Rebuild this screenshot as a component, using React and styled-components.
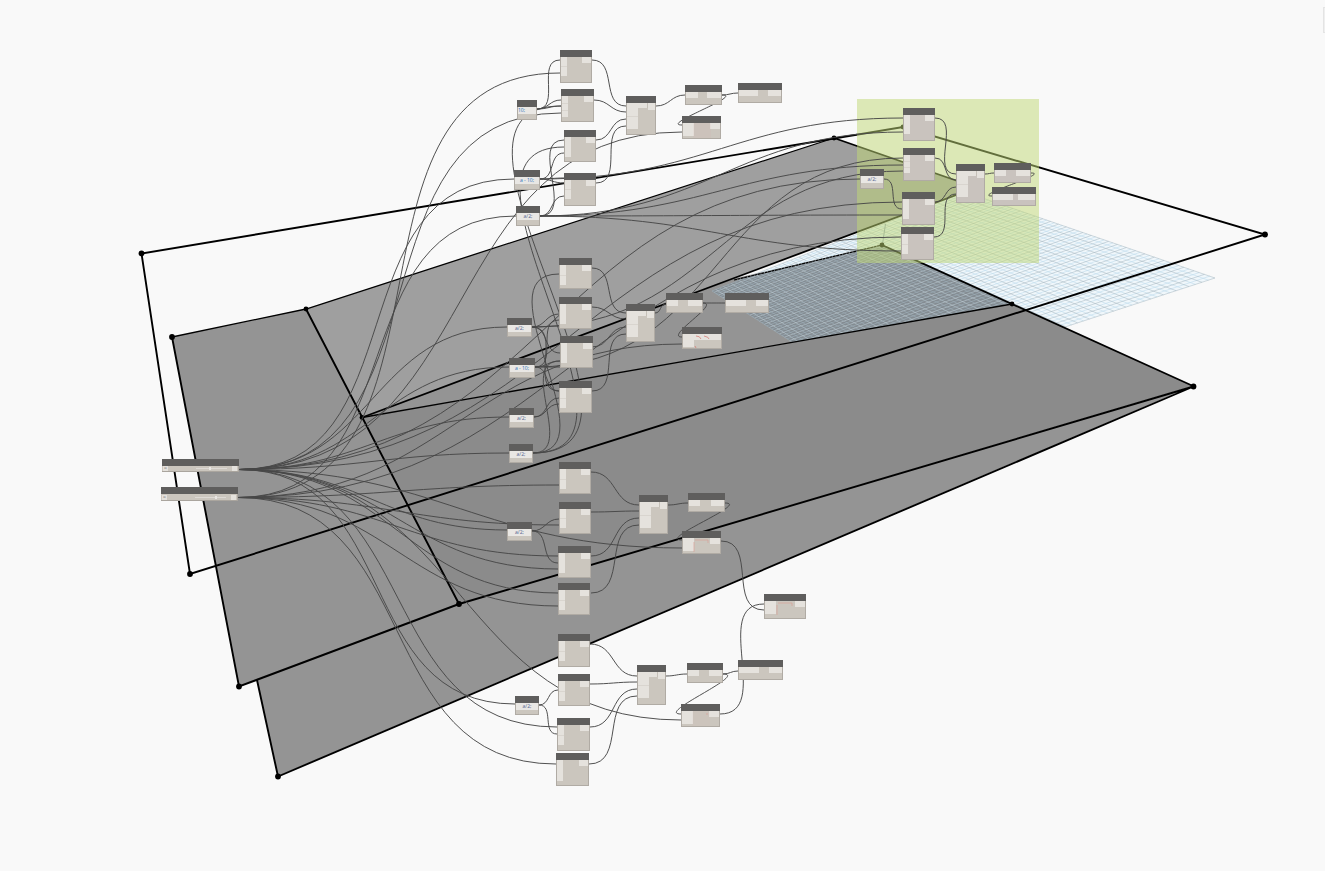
import React from 'react'
import styled, { createGlobalStyle } from 'styled-components'

const GlobalStyle = createGlobalStyle`
  body {
    margin: 0;
    background: #f9f9f9;
    font-family: 'Open Sans', 'Noto Sans', sans-serif;
    overflow: hidden;
  }
`
const Workspace = styled.main`
  position: relative;
  width: 1325px;
  height: 871px;
  overflow: hidden;
  background: #f9f9f9;
`
const Layer = styled.svg`
  position: absolute;
  inset: 0;
  display: block;
`
const GroupArea = styled.div`
  position: absolute;
  left: 857px;
  top: 99px;
  width: 182px;
  height: 164px;
  background: rgba(192, 216, 118, 0.51);
`
const PanelEdge = styled.div`
  position: absolute;
  right: 0;
  top: 7px;
  width: 2px;
  height: 26px;
  box-sizing: border-box;
  border: solid #e4e4e4;
  border-width: 1px 0 1px 1px;
  background: #efefef;
`
const StyledNode = styled.div`
  position: absolute;
  left: ${(p) => p.$x}px;
  top: ${(p) => p.$y}px;
  width: ${(p) => p.$w}px;
  height: ${(p) => p.$h}px;
  display: flex;
  flex-direction: column;
  background: ${(p) => (p.$tinted ? '#c9c3be' : '#cbc6be')};
`
const Header = styled.div`
  flex: none;
  height: ${(p) => p.$size ?? 6.5}px;
  background: #5f5e5d;
`
const Body = styled.div`
  position: relative;
  flex: 1;
  display: flex;
  justify-content: space-between;
  align-items: flex-start;
  box-sizing: border-box;
  border: solid #b0aba4;
  border-width: 0 1px 1px;
`
const Port = styled.div`
  width: ${(p) => p.$w}px;
  height: ${(p) => p.$h}px;
  box-sizing: border-box;
  background: #e5e2dd;
`
const InPorts = styled.div`
  display: flex;
  flex-direction: column;
`
const SplitPort = styled(Port)`
  & + & {
    border-top: 1px solid #d9d5cf;
  }
`
const LacingPort = styled(Port)`
  flex: 1;
  border-right: 1px solid #c5c0b8;
`
const Code = styled.div`
  flex: 1;
  height: 7px;
  background: #e9e7e4;
  color: ${(p) => (p.$blue ? '#2f74bd' : '#50628f')};
  font-size: 5px;
  line-height: 6px;
  text-align: ${(p) => (p.$left ? 'left' : 'center')};
  white-space: nowrap;
`
const Marks = styled.svg`
  position: absolute;
  left: 10px;
  top: 0;
`
const SliderRow = styled.div`
  flex: 1;
  display: flex;
  align-items: center;
  gap: 2px;
  padding: 0 1px;
  box-sizing: border-box;
  border: solid #aaa59e;
  border-width: 0 1px 1px 0;
`
const SliderCap = styled.span`
  width: 5px;
  height: 5px;
  box-sizing: border-box;
  background: #e4e1dc;
  font-size: 4px;
  line-height: 4px;
  text-align: center;
  color: #555;
`
const Track = styled.span`
  position: relative;
  flex: 1;
  height: 1px;
  margin-left: ${(p) => p.$start}px;
  margin-right: 3px;
  background: #dedad5;

  &::after {
    content: '';
    position: absolute;
    right: ${(p) => p.$thumb}px;
    top: -1px;
    width: 2px;
    height: 3px;
    background: #e9e6e2;
  }
`

const fnNodes = [
  [560, 50, 32, 33, 19, 2], [561, 89, 33, 33, 21, 3], [564, 130, 32, 32, 20, 1], [564, 173, 32, 33, 19, 2],
  [559, 258, 33, 31, 20, 2], [559, 297, 33, 32, 20, 1], [560, 336, 33, 32, 20, 1], [559, 381, 33, 32, 20, 2],
  [559, 462, 32, 32, 20, 2], [559, 502, 32, 32, 19, 2], [558, 546, 33, 32, 20, 1], [558, 583, 32, 32, 20, 2],
  [558, 634, 32, 33, 20, 2], [558, 674, 32, 32, 20, 2], [557, 718, 33, 33, 20, 2], [556, 753, 33, 33, 21, 1],
  [903, 108, 32, 33, 19, 1, true], [903, 148, 32, 33, 19, 3, true], [902, 192, 33, 33, 20, 1, true], [901, 227, 33, 33, 20, 2, true],
]

const codeNodes = [
  [517, 100, 20, 20, '10;', true, true], [514, 170, 26, 20, 'a - 10;', true], [516, 206, 24, 20, 'a/2;'],
  [507, 318, 25, 19, 'a/2;'], [509, 358, 26, 19.5, 'a - 10;', true], [509, 408, 25, 20, 'a/2;'],
  [509, 444, 24, 19, 'a/2;'], [507, 522, 25, 19, 'a/2;'], [515, 696, 24, 19, 'a/2;'], [860, 169, 24, 20, 'a/2;'],
]

const listNodes = [
  [626, 96, 30, 39], [626, 304, 29, 38], [639, 495, 29, 39], [637, 665, 29, 40], [956, 164, 29, 39, true],
]

// x, y, width, height, in port width, out port width
const wideNodes = [
  [685, 85, 37, 20, 12, 14], [738, 83, 44, 20, 19, 13],
  [666, 293, 37, 20, 11, 14], [725, 293, 44, 20, 20, 12],
  [688, 493, 37, 19, 11, 13],
  [687, 663, 36, 20, 11, 13], [738, 660, 45, 20, 20, 13],
  [994, 163, 37, 20, 11, 14, true], [992, 187, 44, 19, 20, 17, true],
]

const geometryNodes = [
  { box: [682, 116, 39, 23], tint: 0.1 },
  { box: [682, 327, 40, 22], marks: 'M3 2q4 0 5 3M11 2q5 1 5 3M2 12l1 2', strong: true },
  { box: [682, 531, 39, 23], marks: 'M2 2h13v3M1 4v10' },
  { box: [764, 594, 42, 25], marks: 'M3 2h14v3M2 4v10' },
  { box: [681, 704, 39, 23], marks: 'M15 2v2', tint: 0.06 },
]

const S1 = [239, 469.5]
const S2 = [238, 497.5]

const wires = [
  // slider outputs
  [S2, [560, 73]], [S1, [561, 113]], [S1, [514, 179]], [S2, [516, 216]], [S1, [682, 132]],
  [S1, [507, 327]], [S1, [509, 367]], [S1, [509, 417]], [S1, [509, 453]], [S2, [682, 344]],
  [S2, [559, 485]], [S2, [559, 525]], [S1, [507, 530]], [S2, [558, 556]], [S1, [558, 569]],
  [S1, [558, 593]], [S2, [558, 606]], [S1, [682, 548]], [S1, [681, 720]],
  [S1, [515, 704]], [S1, [557, 727]], [S2, [556, 764]],
  [S1, [860, 179]], [S1, [902, 202]], [S2, [901, 237]],
  // first cluster
  [[537, 109], [560, 60]], [[537, 109], [561, 100]], [[537, 109], [561, 106]],
  [[540, 179], [564, 153]], [[540, 179], [564, 183]], [[540, 179], [564, 178]],
  [[540, 216], [564, 140]], [[540, 216], [564, 196]],
  [[540, 179], [903, 118]], [[540, 216], [903, 132]], [[540, 216], [903, 165]],
  [[540, 216], [902, 215]], [[540, 216], [901, 251]],
  [[592, 60], [626, 106]], [[594, 100], [626, 112]], [[596, 140], [626, 119]], [[596, 183], [626, 126]],
  [[656, 106], [685, 95]], [[722, 95], [738, 93]], [[722, 95], [682, 125]],
  // second cluster
  [[533, 453], [564, 147]], [[533, 453], [561, 106]], [[533, 453], [559, 274]], [[533, 453], [560, 361]],
  [[532, 327], [559, 314]], [[532, 327], [559, 326]], [[532, 327], [560, 353]], [[532, 327], [559, 391]],
  [[535, 367], [559, 320]], [[535, 367], [560, 361]], [[535, 367], [559, 391]], [[535, 367], [560, 367]],
  [[534, 417], [559, 398]], [[534, 417], [559, 404]],
  [[532, 327], [903, 171]], [[535, 367], [903, 158]],
  [[592, 268], [626, 313]], [[592, 307], [626, 319]], [[592, 347], [626, 327]], [[592, 391], [626, 334]],
  [[655, 313], [666, 304]], [[703, 303], [725, 303]], [[703, 303], [682, 337]],
  // third cluster
  [[532, 531], [559, 519]], [[532, 531], [558, 563]],
  [[591, 472], [639, 505]], [[591, 512], [639, 511]], [[591, 556], [639, 518]], [[591, 593], [639, 525]],
  [[668, 505], [688, 503]], [[725, 503], [682, 540]], [[721, 541], [764, 610]], [[720, 714], [764, 604]],
  // fourth cluster
  [[539, 705], [558, 690]], [[539, 705], [557, 734]],
  [[590, 644], [637, 676]], [[590, 684], [637, 682]], [[590, 727], [637, 689]], [[589, 764], [637, 696]],
  [[666, 676], [687, 674]], [[723, 674], [738, 671]], [[723, 674], [681, 714]],
  // highlighted cluster
  [[884, 179], [902, 209]], [[935, 118], [956, 174]], [[935, 158], [956, 180]],
  [[935, 202], [956, 187]], [[934, 237], [956, 194]],
  [[985, 174], [994, 173]], [[1031, 173], [992, 196]],
]

const wirePath = ([[x1, y1], [x2, y2]]) => {
  const offset = Math.hypot(x2 - x1, y2 - y1) * 0.45
  return `M${x1} ${y1}C${x1 + offset} ${y1} ${x2 - offset} ${y2} ${x2} ${y2}`
}

// maps the unit square onto the ground plane quad
const project = (() => {
  const [[x0, y0], [x1, y1], [x2, y2], [x3, y3]] = [[712, 291], [965, 192], [1215, 278], [869, 391]]
  const dx1 = x1 - x2
  const dx2 = x3 - x2
  const dx3 = x0 - x1 + x2 - x3
  const dy1 = y1 - y2
  const dy2 = y3 - y2
  const dy3 = y0 - y1 + y2 - y3
  const det = dx1 * dy2 - dx2 * dy1
  const g = (dx3 * dy2 - dx2 * dy3) / det
  const h = (dx1 * dy3 - dx3 * dy1) / det
  return (u, v) => {
    const w = g * u + h * v + 1
    const x = ((x1 - x0 + g * x1) * u + (x3 - x0 + h * x3) * v + x0) / w
    const y = ((y1 - y0 + g * y1) * u + (y3 - y0 + h * y3) * v + y0) / w
    return `${x.toFixed(2)} ${y.toFixed(2)}`
  }
})()

const CELLS = 60
const STEP = 2
const gridPath = (major) =>
  Array.from({ length: CELLS + 1 }, (_, i) => i)
    .filter((i) => (i % STEP === 0) === major)
    .map((i) => {
      const t = i / CELLS
      return `M${project(t, 0)}L${project(t, 1)}M${project(0, t)}L${project(1, t)}`
    })
    .join('')

const dots = [
  [141.5, 253.5], [172, 337], [190, 574], [239, 686.5], [278, 776.5], [459, 604], [1193.5, 386.5],
  [1265, 234.5],
]
const smallDots = [[306, 309], [834, 138], [362, 417.5], [903, 127], [882, 245], [1012, 304]]

const Geometry = () => (
  <Layer width="1325" height="871">
    <defs>
      <clipPath id="shade">
        <path d="M640 314L734 279L882 245L1012 304L362 417.500Z" />
      </clipPath>
    </defs>
    <path d={`M${project(0, 0)}L${project(1, 0)}L${project(1, 1)}L${project(0, 1)}Z`} fill="#f0f7fb" />
    <path d={gridPath(false)} stroke="#bfdcec" strokeWidth="0.6" fill="none" />
    <path d={gridPath(true)} stroke="#a3b4be" strokeWidth="0.5" fill="none" />
    <path d="M306 309L834 138L976 187.500L362 417.500Z" fill="#9f9f9f" />
    <path d="M362 417.500L734 278.500L882 245L1012 304Z" fill="#949494" />
    <g clipPath="url(#shade)">
      <path d={`M${project(0, 0)}L${project(1, 0)}L${project(1, 1)}L${project(0, 1)}Z`} fill="#848c92" />
      <path d={gridPath(false)} stroke="#bccbd4" strokeWidth="0.6" fill="none" />
      <path d={gridPath(true)} stroke="#a0b0ba" strokeWidth="0.6" fill="none" />
    </g>
    <path d="M257 680L278 776L1193 386L459 604Z" fill="#949494" />
    <path d="M172 337L306 309L459 604L239 686Z" fill="#949494" />
    <path d="M362 417.500L1012 304L1193 386L459 604Z" fill="#8b8b8b" />
    <g stroke="#000" fill="none">
      <path d="M172 337L306 309L834 138M362 417.500L1012 304" strokeWidth="1.3" />
      <path d="M734 280L882 245" strokeWidth="1.2" strokeDasharray="3 0.500" />
      <path d="M834 138L976 187.500L362 417.500M882 245L1193 386" strokeWidth="1.8" />
      <path
        d="M190 574L141.500 253.500L903 127L1265 234.500ZM172 337L239 686.500L459 604L1193.500 386.500L278 776.500L257 680M306 309L459 604"
        strokeWidth="1.9"
      />
    </g>
    <path d="M885.500 224L882.500 244" stroke="#8f9fb3" />
    {dots.map(([x, y]) => (
      <circle key={`${x}-${y}`} cx={x} cy={y} r="2.9" />
    ))}
    {smallDots.map(([x, y]) => (
      <circle key={`${x}-${y}`} cx={x} cy={y} r="2.4" />
    ))}
  </Layer>
)

const Node = ({ box: [x, y, w, h], header, tinted, children }) => (
  <StyledNode $x={x} $y={y} $w={w} $h={h} $tinted={tinted}>
    <Header $size={header} />
    {children}
  </StyledNode>
)

const FunctionNode = ({ data: [x, y, w, h, portHeight, ports, tinted] }) => (
  <Node box={[x, y, w, h]} tinted={tinted}>
    <Body>
      <InPorts>
        {Array.from({ length: ports }, (_, i) => (
          <SplitPort key={i} $w={5.5} $h={portHeight / ports} />
        ))}
      </InPorts>
      <Port $w={9.5} $h={6} />
    </Body>
  </Node>
)

const App = () => (
  <>
    <GlobalStyle />
    <Workspace>
      <Geometry />
      <GroupArea />
      <Layer width="1325" height="871" fill="none" stroke="#484848" strokeWidth="0.95">
        {wires.map((wire, index) => (
          <path key={index} d={wirePath(wire)} />
        ))}
      </Layer>
      {fnNodes.map((data, index) => (
        <FunctionNode key={index} data={data} />
      ))}
      {codeNodes.map(([x, y, w, h, code, blue, left], index) => (
        <Node key={index} box={[x, y, w, h]}>
          <Body>
            <Code $blue={blue} $left={left}>{code}</Code>
          </Body>
        </Node>
      ))}
      {listNodes.map(([x, y, w, h, tinted], index) => (
        <Node key={index} box={[x, y, w, h]} tinted={tinted}>
          <Body>
            <InPorts>
              <SplitPort $w={10.5} $h={13} />
              <SplitPort $w={10.5} $h={13} />
            </InPorts>
            <LacingPort $h={5} />
            <Port $w={7} $h={7} />
          </Body>
        </Node>
      ))}
      {wideNodes.map(([x, y, w, h, inW, outW, tinted], index) => (
        <Node key={index} box={[x, y, w, h]} tinted={tinted}>
          <Body>
            <Port $w={inW} $h={6} />
            <Port $w={outW} $h={6} />
          </Body>
        </Node>
      ))}
      {geometryNodes.map(({ box, marks, tint, strong }, index) => (
        <Node key={index} box={box}>
          <Body>
            <Port $w={11} $h={13} />
            <Port $w={strong ? 28 : 10} $h={6} />
            <Marks width="20" height="16">
              <rect width="18" height="15" fill={`rgba(214, 170, 165, ${tint ?? 0})`} />
              {marks && (
                <path d={marks} fill="none" stroke={strong ? '#d4736c' : '#d9a099'} strokeWidth="0.7" />
              )}
            </Marks>
          </Body>
        </Node>
      ))}
      <Node box={[162, 459, 77, 13]} header={7}>
        <SliderRow>
          <SliderCap>o</SliderCap>
          <Track $start={26} $thumb={16} />
          <SliderCap />
        </SliderRow>
      </Node>
      <Node box={[161, 487, 77, 14]} header={7}>
        <SliderRow>
          <SliderCap>o</SliderCap>
          <Track $start={26} $thumb={9} />
          <SliderCap />
        </SliderRow>
      </Node>
      <PanelEdge />
    </Workspace>
  </>
)

export default App
